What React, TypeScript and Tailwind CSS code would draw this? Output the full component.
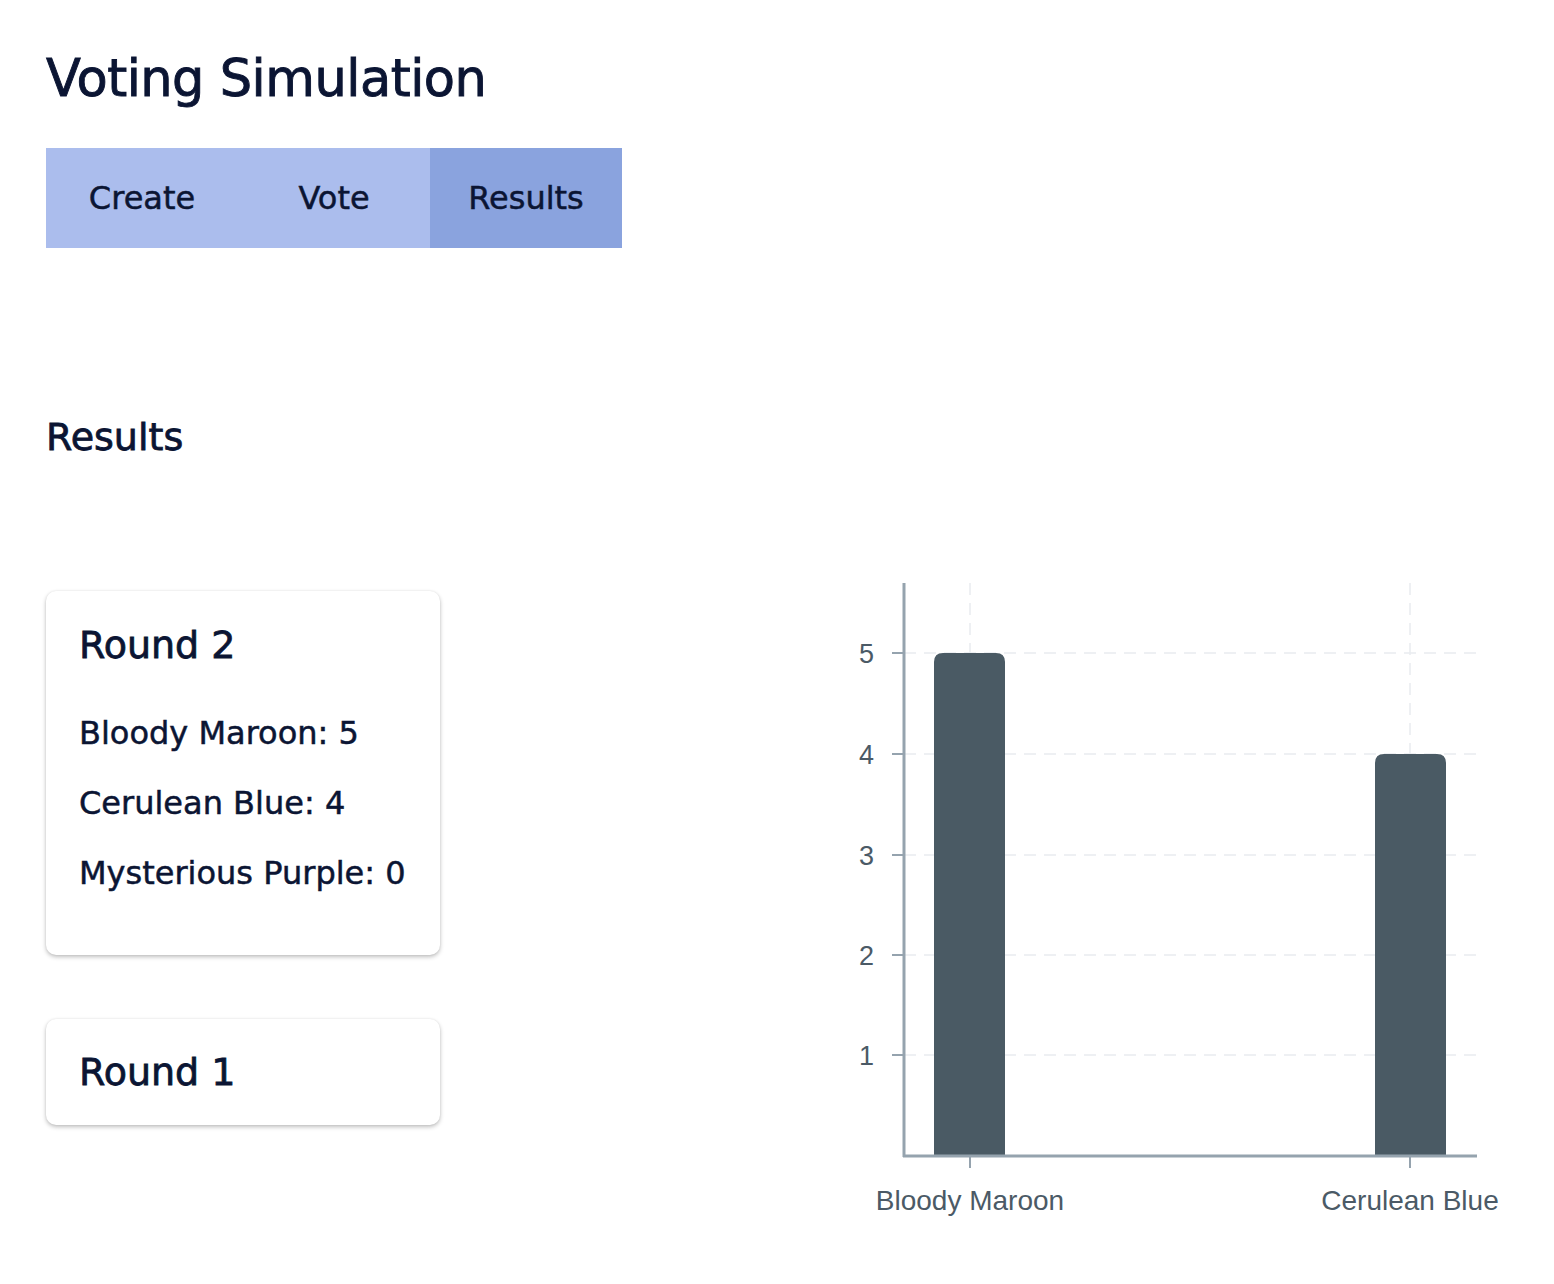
import React from "react";

const font = { fontFamily: '"DejaVu Sans", sans-serif' };
const chartFont = { fontFamily: '"Liberation Sans", Arial, sans-serif' };

function Chart() {
  const yTicks = [
    { v: 5, y: 83 },
    { v: 4, y: 184 },
    { v: 3, y: 285 },
    { v: 2, y: 385 },
    { v: 1, y: 485 },
  ];
  const bar = (x: number, top: number) => {
    const w = 71;
    const r = 9;
    const b = 586;
    return `M${x} ${b} L${x} ${top + r} Q${x} ${top} ${x + r} ${top} L${x + w - r} ${top} Q${x + w} ${top} ${x + w} ${top + r} L${x + w} ${b} Z`;
  };
  return (
    <svg width="680" height="660" viewBox="0 0 680 660" className="block">
      {yTicks.map((t) => (
        <line key={t.v} x1="64" x2="636" y1={t.y} y2={t.y} stroke="#e9ecef" strokeWidth="1.5" strokeDasharray="12 8" />
      ))}
      <line x1="130" x2="130" y1="13" y2="586" stroke="#e9ecef" strokeWidth="1.5" strokeDasharray="12 8" />
      <line x1="570" x2="570" y1="13" y2="586" stroke="#e9ecef" strokeWidth="1.5" strokeDasharray="12 8" />
      <path d={bar(94, 83)} fill="#4a5a64" />
      <path d={bar(535, 184)} fill="#4a5a64" />
      <line x1="64" x2="64" y1="13" y2="587" stroke="#95a3ae" strokeWidth="3" />
      <line x1="63" x2="637" y1="586" y2="586" stroke="#95a3ae" strokeWidth="3" />
      {yTicks.map((t) => (
        <g key={"t" + t.v}>
          <line x1="52" x2="64" y1={t.y} y2={t.y} stroke="#95a3ae" strokeWidth="2" />
          <text x="34" y={t.y + 10} textAnchor="end" fontSize="27" fill="#4b5a66" style={chartFont}>
            {t.v}
          </text>
        </g>
      ))}
      <line x1="130" x2="130" y1="587" y2="598" stroke="#95a3ae" strokeWidth="2" />
      <line x1="570" x2="570" y1="587" y2="598" stroke="#95a3ae" strokeWidth="2" />
      <text x="130" y="640" textAnchor="middle" fontSize="28" fill="#4b5a66" style={chartFont}>
        Bloody Maroon
      </text>
      <text x="570" y="640" textAnchor="middle" fontSize="28" fill="#4b5a66" style={chartFont}>
        Cerulean Blue
      </text>
    </svg>
  );
}

export default function App() {
  return (
    <div className="min-h-[1284px] bg-white text-[#0b1533] [-webkit-text-stroke:0.5px_#0b1533]" style={font}>
      <div className="pl-[46px] pt-[46px]">
        <h1 className="text-[51px] leading-[66px] tracking-[-0.5px] [-webkit-text-stroke:0.9px_#0b1533]">Voting Simulation</h1>
        <div className="mt-[36px] flex w-[576px] h-[100px] text-[32px]">
          <div className="w-[192px] flex items-center justify-center bg-[#abbded]">Create</div>
          <div className="w-[192px] flex items-center justify-center bg-[#abbded]">Vote</div>
          <div className="w-[192px] flex items-center justify-center bg-[#8aa3de]">Results</div>
        </div>
        <h2 className="mt-[166px] text-[38px] leading-[46px] [-webkit-text-stroke:0.8px_#0b1533]">Results</h2>
        <div className="flex items-start mt-[131px]">
          <div className="w-[394px] flex flex-col gap-[64px]">
            <div className="rounded-[10px] bg-white shadow-[0_2px_4px_rgba(0,0,0,0.25),0_0_2px_rgba(0,0,0,0.08)] px-[33px] pt-[30px] pb-[58px]">
              <div className="text-[38px] leading-[48px] [-webkit-text-stroke:0.8px_#0b1533]">Round 2</div>
              <div className="mt-[40px] flex flex-col gap-[22px] text-[32px] leading-[48px]">
                <div>Bloody Maroon: 5</div>
                <div>Cerulean Blue: 4</div>
                <div>Mysterious Purple: 0</div>
              </div>
            </div>
            <div className="rounded-[10px] bg-white shadow-[0_2px_4px_rgba(0,0,0,0.25),0_0_2px_rgba(0,0,0,0.08)] px-[33px] h-[106px] flex items-center">
              <div className="text-[38px] leading-[48px] [-webkit-text-stroke:0.8px_#0b1533]">Round 1</div>
            </div>
          </div>
          <div className="ml-[400px] -mt-[21px]">
            <Chart />
          </div>
        </div>
      </div>
    </div>
  );
}
